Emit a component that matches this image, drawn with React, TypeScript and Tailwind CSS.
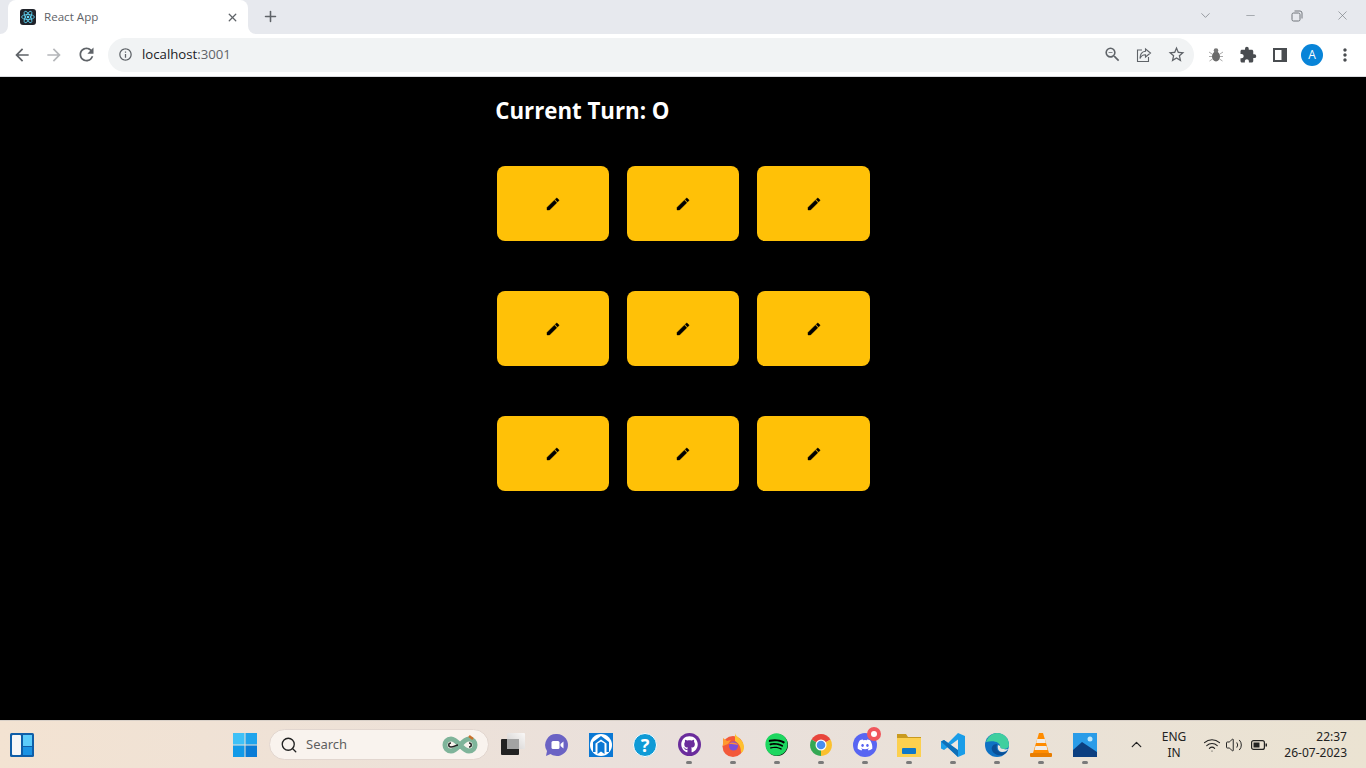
import { MdArrowBack, MdArrowForward, MdRefresh, MdExtension, MdMoreVert, MdOutlineInfo, MdStarBorder, MdOutlineZoomOut } from "react-icons/md";
import { FaGithub, FaSpotify, FaDiscord } from "react-icons/fa";
import { ChevronDown, ChevronUp, Minus, Plus, Search, Volume2, X, Wifi } from "lucide-react";

const cells = [0, 1, 2, 3, 4, 5, 6, 7, 8];

const ReactLogo = () => (
  <svg viewBox="0 0 16 16" className="h-4 w-4 rounded-[3px] bg-[#20232a]">
    <g fill="none" stroke="#61dafb" strokeWidth="0.8">
      <ellipse cx="8" cy="8" rx="6.4" ry="2.5" />
      <ellipse cx="8" cy="8" rx="6.4" ry="2.5" transform="rotate(60 8 8)" />
      <ellipse cx="8" cy="8" rx="6.4" ry="2.5" transform="rotate(120 8 8)" />
    </g>
    <circle cx="8" cy="8" r="1.3" fill="#61dafb" />
  </svg>
);

const PencilIcon = () => (
  <svg viewBox="0 0 24 24" className="h-4 w-4" fill="currentColor" stroke="currentColor" strokeWidth="0.6" strokeLinejoin="round">
    <path d="M3 17.25V21h3.75L17.81 9.94l-3.75-3.75L3 17.25zM20.71 7.04a1 1 0 0 0 0-1.41l-2.34-2.34a1 1 0 0 0-1.41 0l-1.83 1.83 3.75 3.75 1.83-1.83z" />
  </svg>
);

const TabBar = () => (
  <div className="flex h-[34px] shrink-0 items-end bg-[#e7e9ee] pl-2">
    <div className="relative flex h-[34px] w-[240px] items-center rounded-t-lg bg-white pl-3 pr-[9px]">
      <ReactLogo />
      <span className="ml-2 flex-1 text-[11.6px] text-[#5f6368]">React App</span>
      <X size={13} strokeWidth={2.4} className="text-[#5f6368]" />
      <svg viewBox="0 0 8 8" className="absolute bottom-0 left-[-8px] h-2 w-2">
        <path d="M8 0v8H0a8 8 0 0 0 8-8z" fill="#fff" />
      </svg>
      <svg viewBox="0 0 8 8" className="absolute bottom-0 right-[-8px] h-2 w-2">
        <path d="M0 0v8h8a8 8 0 0 1-8-8z" fill="#fff" />
      </svg>
    </div>
    <Plus size={17} strokeWidth={2.2} className="mb-[9px] ml-[14px] text-[#5f6368]" />
    <div className="mb-[11px] ml-auto flex items-center text-[#70757a]">
      <ChevronDown size={15} strokeWidth={1.1} className="mr-[31px]" />
      <Minus size={13} strokeWidth={1} className="mr-[34px]" />
      <svg viewBox="0 0 12 12" className="mr-[32px] h-3 w-3" fill="none" stroke="currentColor" strokeWidth="1">
        <rect x="1" y="3" width="8" height="8" rx="1.5" />
        <path d="M3.5 1h5.5a2 2 0 0 1 2 2v5.5" />
      </svg>
      <X size={15} strokeWidth={1} className="mr-4" />
    </div>
  </div>
);

const Toolbar = () => (
  <div className="flex h-[43px] shrink-0 items-center border-b border-[#dadce0] bg-white pb-px text-[#5f6368]">
    <MdArrowBack size={20} className="ml-3" />
    <MdArrowForward size={20} className="ml-3 text-[#b5b7ba]" />
    <MdRefresh size={21} className="ml-[12px]" />
    <div className="ml-[11px] flex h-[34px] w-[1086px] items-center rounded-full bg-[#f1f3f4]">
      <MdOutlineInfo size={15} className="ml-[10px]" />
      <span className="ml-[9px] text-[13.2px] text-[#202124]">
        localhost<span className="text-[#5f6368]">:3001</span>
      </span>
      <MdOutlineZoomOut size={19} className="ml-auto mr-[14px]" />
      <svg viewBox="0 0 16 16" className="mr-[15px] h-4 w-4" fill="none" stroke="currentColor" strokeWidth="1.1">
        <path d="M6 3H1.5v11.5h11V10" />
        <path d="M9.5 2l5 4-5 4V7.7C7 7.7 5 9 4 11.5 4 7.5 6 4.6 9.5 4.3z" />
      </svg>
      <MdStarBorder size={19} className="mr-2" />
    </div>
    <svg viewBox="0 0 16 16" className="ml-[14px] h-4 w-4">
      <ellipse cx="8" cy="9.5" rx="4" ry="5" fill="#6b6b6b" />
      <circle cx="8" cy="3.5" r="2.3" fill="#777" />
      <path d="M1 5l3 2M15 5l-3 2M1 9.5h3M15 9.5h-3M1.5 14l3-2M14.500 14l-3-2" stroke="#aaa" strokeWidth="1" />
    </svg>
    <MdExtension size={18} className="ml-[15px] text-[#494c50]" />
    <svg viewBox="0 0 14 14" className="ml-[16px] h-[14px] w-[14px]">
      <path d="M0 0h14v14H0z" fill="#494c50" />
      <path d="M2 2h6.500v10H2z" fill="#fff" />
    </svg>
    <div className="ml-[14px] flex h-[22px] w-[22px] items-center justify-center rounded-full bg-[#0884d8] text-xs text-white">A</div>
    <MdMoreVert size={20} className="ml-[12px] text-[#494c50]" />
  </div>
);

const Board = () => (
  <main className="min-h-0 flex-1 bg-black">
    <div className="mx-auto w-[373.5px]">
      <h1 className="-ml-px pt-[18px] font-['Open_Sans',sans-serif] text-[22.25px] font-bold leading-[32px] text-white">Current Turn: O</h1>
      <div className="mt-[39px] grid grid-cols-3 gap-x-[18px] gap-y-[50px] pl-[0.5px]">
        {cells.map((cell) => (
          <button key={cell} className="flex h-[75px] items-center justify-center rounded-lg bg-[#ffc107] text-black">
            <PencilIcon />
          </button>
        ))}
      </div>
    </div>
  </main>
);

const TaskIcon = ({ running, children }: { running?: boolean; children: React.ReactNode }) => (
  <div className="relative flex h-[48px] w-[44px] items-center justify-center">
    {children}
    {running && <span className="absolute bottom-[5px] h-[3px] w-[6px] rounded-full bg-[#7a7a7a]" />}
  </div>
);

const Taskbar = () => (
  <footer className="flex h-[48px] shrink-0 items-center border-t border-[#d8d0c8] bg-gradient-to-r from-[#f3e3d2] via-[#e9e0dc] to-[#ebe3d2] font-['Noto_Sans',sans-serif]">
    <svg viewBox="0 0 24 24" className="ml-[10px] h-6 w-6">
      <rect width="24" height="24" rx="1.500" fill="#0f5ea8" />
      <rect x="2" y="2" width="9" height="20" rx="1" fill="#f7f7f7" />
      <rect x="13" y="2" width="9" height="11" fill="#5cccfb" />
      <rect x="13" y="14" width="9" height="8" fill="#1b93e4" />
    </svg>
    <svg viewBox="0 0 24 24" className="ml-[199px] h-6 w-6">
      <rect width="11.500" height="11.500" fill="#3fc1f7" />
      <rect x="12.500" width="11.500" height="11.500" fill="#20a4ec" />
      <rect y="12.500" width="11.500" height="11.500" fill="#129ae8" />
      <rect x="12.500" y="12.500" width="11.500" height="11.500" fill="#0a7cd6" />
    </svg>
    <div className="ml-[12px] flex h-[31px] w-[220px] items-center rounded-full border border-[#e2d6cf] bg-[#f9f3ee]">
      <Search size={18} strokeWidth={1.800} className="ml-[10px] text-[#222]" />
      <span className="ml-[8px] text-[13px] text-[#5f5f5f]">Search</span>
      <svg viewBox="0 0 40 22" className="ml-auto mr-2 h-[22px] w-[40px]" fill="none">
        <path d="M11 5c-8 0-8 12 0 12 7 0 11-12 18-12 8 0 8 12 0 12-7 0-11-12-18-12z" stroke="#7fb49a" strokeWidth="5" />
        <path d="M11 9c-3 0-3 4 0 4 3 0 5-2 7-2M29 9c3 0 3 4 0 4" stroke="#222" strokeWidth="1.500" />
        <path d="M29 2l4 3" stroke="#c8702a" strokeWidth="2.500" />
      </svg>
    </div>
    <div className="ml-[2px] flex">
      <TaskIcon>
        <svg viewBox="0 0 24 24" className="h-[24px] w-[24px]">
          <defs>
            <linearGradient id="taskview" x1="0" y1="1" x2="1" y2="0">
              <stop offset="0" stopColor="#cfcdcc" />
              <stop offset="1" stopColor="#faf8f7" />
            </linearGradient>
          </defs>
          <rect x="0" y="6" width="18" height="16" rx="1" fill="#222" />
          <rect x="6" y="0" width="18" height="16" rx="1" fill="url(#taskview)" />
          <rect x="6" y="6" width="12" height="10" fill="#a3a3a3" />
        </svg>
      </TaskIcon>
      <TaskIcon>
        <svg viewBox="0 0 24 24" className="h-6 w-6">
          <path d="M12 1a11 11 0 1 1-6.500 19.900L1 23l1-5A11 11 0 0 1 12 1z" fill="#6b63c4" />
          <rect x="6.500" y="8" width="8" height="8" rx="1.500" fill="#fff" />
          <path d="M15.500 11l3-2.500v7l-3-2.500z" fill="#fff" />
        </svg>
      </TaskIcon>
      <TaskIcon>
        <svg viewBox="0 0 24 24" className="h-6 w-6">
          <rect width="24" height="24" fill="#0a78d4" />
          <circle cx="12" cy="12" r="11" fill="#fff" />
          <path d="M12 3l8 6v10h-2.500v-8.500L12 6.500l-5.500 4V19H4V9z" fill="#0a78d4" />
          <path d="M8.500 10.500L12 8.500l3.500 2V21L12 18.500 8.500 21z" fill="#0a78d4" />
        </svg>
      </TaskIcon>
      <TaskIcon>
        <div className="flex h-6 w-6 items-center justify-center rounded-full border border-white bg-[#0f9ad6] text-lg font-bold leading-none text-white">?</div>
      </TaskIcon>
      <TaskIcon running>
        <div className="flex h-[23px] w-[23px] items-center justify-center rounded-full bg-[#6a2c9c] text-white">
          <FaGithub size={17} />
        </div>
      </TaskIcon>
      <TaskIcon running>
        <svg viewBox="0 0 24 24" className="h-6 w-6">
          <circle cx="12" cy="13.500" r="10.500" fill="#f3593a" />
          <path d="M14 0c0 4 9 6 9 14 0 3-1 5-3 6 0-5-1-9-6-12z" fill="#ffc02e" />
          <path d="M2 5l4 3 4-1-3 4-5 2z" fill="#ff9a2e" />
          <circle cx="12.500" cy="13" r="4.500" fill="#7a4fd8" />
          <path d="M8 11c2-2 7-2 9 1-3-1-6-1-9-1z" fill="#ff8a3a" />
        </svg>
      </TaskIcon>
      <TaskIcon running>
        <div className="relative h-[22px] w-[22px] rounded-full bg-black">
          <FaSpotify size={23} className="absolute -left-px -top-px text-[#1ed760]" />
        </div>
      </TaskIcon>
      <TaskIcon running>
        <svg viewBox="0 0 24 24" className="h-6 w-6">
          <path d="M12 12L2.500 6.500A11 11 0 0 1 21.500 6.500z" fill="#e8453c" />
          <path d="M12 12l9.500-5.500A11 11 0 0 1 12 23z" fill="#fbc02d" />
          <path d="M12 12v11A11 11 0 0 1 2.500 6.500z" fill="#34a853" />
          <circle cx="12" cy="12" r="5.500" fill="#fff" />
          <circle cx="12" cy="12" r="4.300" fill="#4a8ef0" />
        </svg>
      </TaskIcon>
      <TaskIcon running>
        <div className="flex h-6 w-6 items-center justify-center rounded-full bg-[#5865f2] text-white">
          <FaDiscord size={16} />
        </div>
        <span className="absolute right-[6px] top-[6px] flex h-[14px] w-[14px] items-center justify-center rounded-full bg-[#f0565c]">
          <span className="h-[6px] w-[6px] rounded-full bg-white" />
        </span>
      </TaskIcon>
      <TaskIcon running>
        <svg viewBox="0 0 24 24" className="h-6 w-6">
          <path d="M0 1h9l2 3h13v20H0z" fill="#c99a1f" />
          <rect y="5" width="24" height="19" fill="#fcd04f" />
          <rect x="5" y="15" width="14" height="6" rx="1" fill="#0f78c8" />
        </svg>
      </TaskIcon>
      <TaskIcon running>
        <svg viewBox="0 0 24 24" className="h-6 w-6">
          <path d="M17 0l7 3v18l-7 3L7 14l-4 3-3-1.500v-7L3 7l4 3z" fill="#1a9de8" />
          <path d="M17 6.500v11L9.500 12z" fill="#ece6e0" />
          <path d="M0 8.500L3 7l14 10v7z" fill="#0d6fb8" />
        </svg>
      </TaskIcon>
      <TaskIcon running>
        <svg viewBox="0 0 24 24" className="h-6 w-6">
          <circle cx="12" cy="12" r="12" fill="#0f72c4" />
          <path d="M1 9C3 3 8 0 12 0c7 0 12 5 12 12 0 3-3 4-5 4-3 0-4-1-4-3 0-3-5-6-14-4z" fill="#3fcf9f" />
          <path d="M12 11c-4 0-6 3-5 6 1 4 6 6 11 5 2-1 4-3 5-5-2 2-5 3-8 2-3-1-4-3-3-8z" fill="#0a4f96" />
          <path d="M13 12c-1 4 1 7 4 7 3 0 5-1 6-3-1 0-3 1-4 0-3 0-4-1-4-3z" fill="#e9e4df" />
        </svg>
      </TaskIcon>
      <TaskIcon running>
        <svg viewBox="0 0 24 24" className="h-6 w-6">
          <path d="M10 0h4l6 20H4z" fill="#ff8c00" />
          <path d="M8.200 6h7.600l1 4H7.200zM6.500 13h11l1 4h-13z" fill="#f1ece6" />
          <rect x="1" y="20" width="22" height="4" rx="1" fill="#e87d00" />
        </svg>
      </TaskIcon>
      <TaskIcon running>
        <svg viewBox="0 0 24 24" className="h-6 w-6">
          <rect width="24" height="24" fill="#2a9ce8" />
          <path d="M0 17l9-8 15 10v5H0z" fill="#0c3f80" />
          <circle cx="17" cy="6" r="2.500" fill="#bfe7fb" />
        </svg>
      </TaskIcon>
    </div>
    <ChevronUp size={17} strokeWidth={1.800} className="ml-[21px] text-[#222]" />
    <div className="ml-[16px] w-[26px] text-center text-xs leading-[16px] text-[#222]">
      <div>ENG</div>
      <div>IN</div>
    </div>
    <Wifi size={18} strokeWidth={1.500} className="ml-[16px] text-[#222]" />
    <Volume2 size={18} strokeWidth={1.300} className="ml-[4px] text-[#222]" />
    <svg viewBox="0 0 16 10" className="ml-[8px] h-[10px] w-4" fill="none">
      <rect x="0.600" y="0.600" width="12.800" height="8.800" rx="2" stroke="#222" strokeWidth="1.200" />
      <rect x="2.500" y="2.500" width="6" height="5" fill="#222" />
      <rect x="14.500" y="3.500" width="1.500" height="3" fill="#222" />
    </svg>
    <div className="ml-auto mr-[19px] text-right text-xs leading-[16px] text-[#222]">
      <div>22:37</div>
      <div>26-07-2023</div>
    </div>
  </footer>
);

export default function App() {
  return (
    <div className="flex h-screen flex-col overflow-hidden font-['Open_Sans',sans-serif]">
      <TabBar />
      <Toolbar />
      <Board />
      <Taskbar />
    </div>
  );
}
